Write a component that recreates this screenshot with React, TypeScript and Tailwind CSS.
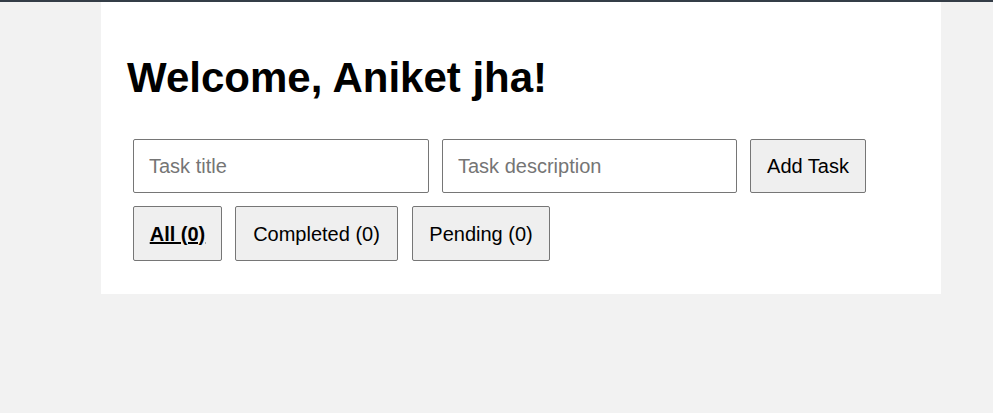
import React, { useState } from 'react';

const App = () => {
  const [filter, setFilter] = useState('all');

  const filters = [
    { key: 'all', label: 'All (0)', width: 'w-[89px]' },
    { key: 'completed', label: 'Completed (0)', width: 'w-[163px]' },
    { key: 'pending', label: 'Pending (0)', width: 'w-[138px] ml-px' },
  ];

  return (
    <div className="min-h-screen bg-[#f2f2f2] border-t-2 border-[#343d47] font-['Liberation_Sans',Arial,sans-serif] text-black">
      {/* Card */}
      <div className="ml-[101px] w-[840px] bg-white pt-[52px] pb-[33px] pl-[26px]">
        <h1 className="text-[42px] leading-[48px] font-bold">Welcome, Aniket jha!</h1>

        <div className="mt-[37px] pl-[6px] flex flex-col gap-[13px]">
          {/* Add task row */}
          <div className="flex gap-[13px]">
            <input
              type="text"
              placeholder="Task title"
              className="w-[296px] h-[54px] border border-[#767676] rounded-[2px] px-[15px] text-[20px] placeholder:text-[#757575] outline-none"
            />
            <input
              type="text"
              placeholder="Task description"
              className="w-[295px] h-[54px] border border-[#767676] rounded-[2px] px-[15px] text-[20px] placeholder:text-[#757575] outline-none"
            />
            <button className="w-[116px] h-[54px] border border-[#767676] rounded-[2px] bg-[#efefef] text-[20px]">
              Add Task
            </button>
          </div>

          {/* Filters */}
          <div className="flex gap-[13px]">
            {filters.map((f) => (
              <button
                key={f.key}
                onClick={() => setFilter(f.key)}
                className={`${f.width} h-[55px] border border-[#767676] rounded-[2px] bg-[#efefef] text-[20px] ${
                  filter === f.key ? 'font-bold underline' : ''
                }`}
              >
                {f.label}
              </button>
            ))}
          </div>
        </div>
      </div>
    </div>
  );
};

export default App;
